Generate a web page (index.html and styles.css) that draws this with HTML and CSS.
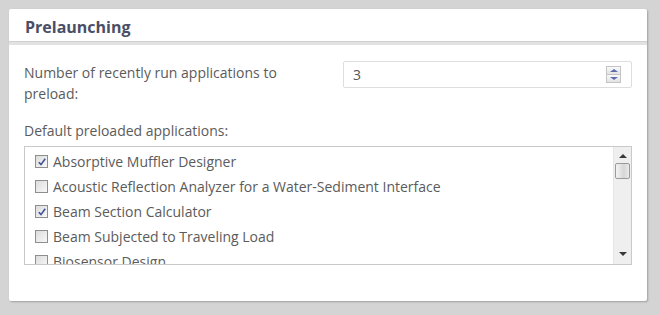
FILE: index.html
```html
<!DOCTYPE html>
<html lang="en">
<head>
    <meta charset="UTF-8">
    <title>Prelaunching</title>
    <link rel="stylesheet" href="styles.css">
</head>
<body>
    <div class="panel">
        <div class="panel-header">
            <h2>Prelaunching</h2>
        </div>
        <div class="panel-body">
            <div class="field-row">
                <label class="field-label" for="recentCount">Number of recently run applications to preload:</label>
                <div class="spin-input">
                    <span class="spin-value">3</span>
                    <div class="spin-buttons">
                        <span class="spin-btn up"></span>
                        <span class="spin-btn down"></span>
                    </div>
                </div>
            </div>
            <div class="list-label">Default preloaded applications:</div>
            <div class="app-list">
                <ul class="app-items">
                    <li><span class="check checked"><svg viewBox="0 0 8 8" width="8" height="8"><path d="M0.8 4.2 L3 6.6 L7.2 0.8" fill="none" stroke="#3f4f95" stroke-width="1.6"/></svg></span>Absorptive Muffler Designer</li>
                    <li><span class="check"></span>Acoustic Reflection Analyzer for a Water-Sediment Interface</li>
                    <li><span class="check checked"><svg viewBox="0 0 8 8" width="8" height="8"><path d="M0.8 4.2 L3 6.6 L7.2 0.8" fill="none" stroke="#3f4f95" stroke-width="1.6"/></svg></span>Beam Section Calculator</li>
                    <li><span class="check"></span>Beam Subjected to Traveling Load</li>
                    <li><span class="check"></span>Biosensor Design</li>
                </ul>
                <div class="scrollbar">
                    <span class="arrow up"></span>
                    <span class="thumb"></span>
                    <span class="track"></span>
                    <span class="arrow down"></span>
                </div>
            </div>
        </div>
    </div>
</body>
</html>
```

FILE: styles.css
```css
body {
    margin: 0;
    padding: 9px 12px 14px 9px;
    background-color: #d4d4d4;
    font-family: "Open Sans", "Liberation Sans", sans-serif;
    font-size: 14px;
    color: #5b5b5b;
}

.panel {
    background-color: #fff;
    border-radius: 2px;
    box-shadow: 1px 1px 2px rgba(0, 0, 0, 0.25);
    height: 292px;
}

.panel-header {
    height: 33px;
    border-bottom: 3px solid #e2e2e2;
    box-shadow: 0 -1px 0 #d0d0d0 inset;
}

.panel-header h2 {
    margin: 0;
    padding: 7px 0 0 16px;
    font-size: 16px;
    font-weight: bold;
    color: #4a4e66;
    line-height: 22px;
}

.panel-body {
    padding: 16px 15px 0 15px;
}

.field-row {
    display: flex;
    align-items: flex-start;
}

.field-label {
    width: 270px;
    line-height: 21px;
    padding-top: 1px;
}

.spin-input {
    margin-left: 49px;
    flex-grow: 1;
    height: 25px;
    border: 1px solid #dedede;
    border-radius: 2px;
    display: flex;
    align-items: center;
    justify-content: space-between;
    padding: 0 10px 0 9px;
}

.spin-value {
    color: #555;
}

.spin-buttons {
    display: flex;
    flex-direction: column;
}

.spin-btn {
    width: 13px;
    height: 7px;
    border: 1px solid #c4c4c4;
    background: linear-gradient(#fafafa, #e2e2e2);
    position: relative;
}

.spin-btn.down {
    border-top: none;
}

.spin-btn::after {
    content: "";
    position: absolute;
    left: 3px;
    border-left: 4px solid transparent;
    border-right: 4px solid transparent;
}

.spin-btn.up::after {
    top: 2px;
    border-bottom: 3px solid #5b6bb0;
}

.spin-btn.down::after {
    top: 2px;
    border-top: 3px solid #5b6bb0;
}

.list-label {
    margin-top: 16px;
    line-height: 21px;
}

.app-list {
    margin-top: 5px;
    height: 117px;
    border: 1px solid #c9c9c9;
    display: flex;
    overflow: hidden;
}

.app-items {
    list-style: none;
    margin: 0;
    padding: 2px 0 0 10px;
    flex-grow: 1;
    overflow: hidden;
}

.app-items li {
    height: 25px;
    line-height: 25px;
    display: flex;
    align-items: center;
    white-space: nowrap;
}

.check {
    width: 11px;
    height: 11px;
    border: 1px solid #8e8e8e;
    background: linear-gradient(135deg, #dcdcdc, #f8f8f8);
    margin-right: 5px;
    display: flex;
    align-items: center;
    justify-content: center;
    flex-shrink: 0;
}

.scrollbar {
    width: 17px;
    background-color: #efefef;
    border-left: 1px solid #e6e6e6;
    display: flex;
    flex-direction: column;
    align-items: center;
}

.arrow {
    width: 0;
    height: 0;
    border-left: 4px solid transparent;
    border-right: 4px solid transparent;
}

.arrow.up {
    margin-top: 7px;
    border-bottom: 4px solid #3a3a3a;
}

.arrow.down {
    margin-bottom: 8px;
    border-top: 4px solid #3a3a3a;
}

.thumb {
    margin-top: 5px;
    width: 13px;
    height: 14px;
    border: 1px solid #9a9a9a;
    border-radius: 2px;
    background: linear-gradient(90deg, #f4f4f4, #d6d6d6 60%, #eaeaea);
}

.track {
    flex-grow: 1;
}
```
